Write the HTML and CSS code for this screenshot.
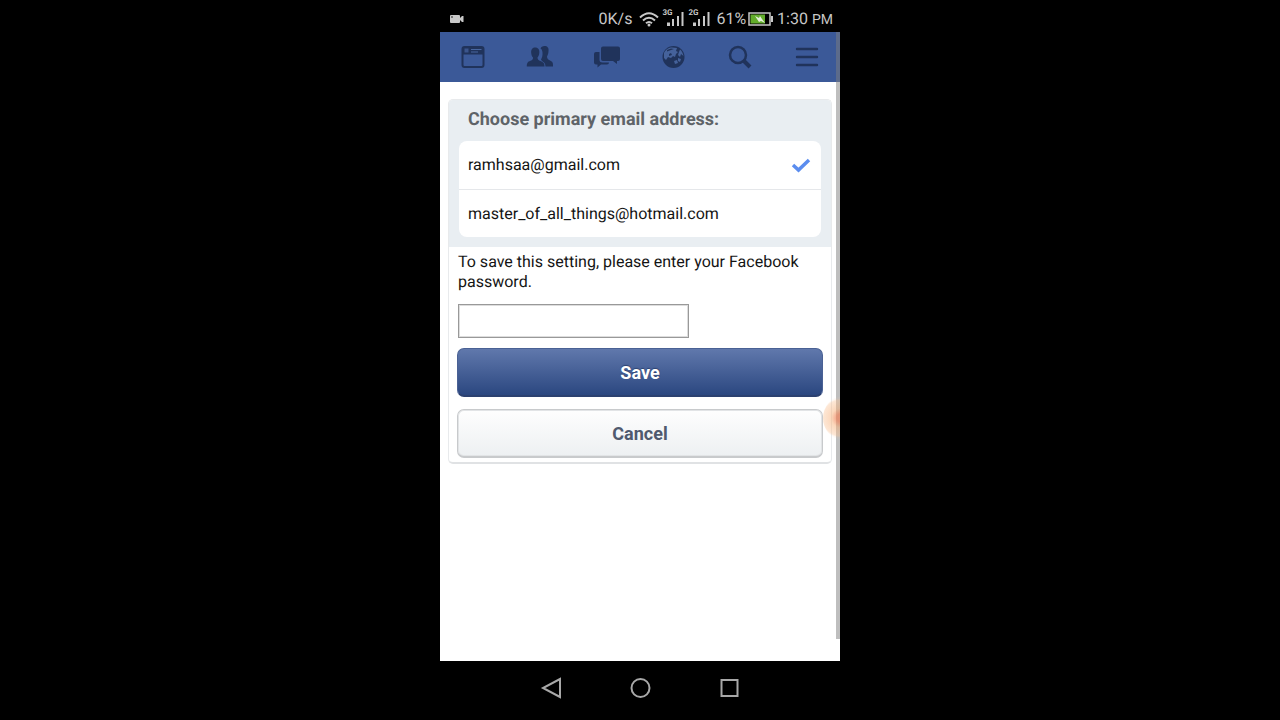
FILE: index.html
```html
<!DOCTYPE html>
<html lang="en">
<head>
  <meta charset="UTF-8">
  <meta name="viewport" content="width=device-width, initial-scale=1.0">
  <title>Primary email address</title>
  <link rel="stylesheet" href="styles.css">
</head>
<body>
<div class="phone">
  <header class="status">
    <svg class="camera" width="14" height="10" viewBox="0 0 14 10"><rect y="1" width="10" height="8" rx="1"/><path d="M10 4l2-2h1.500v6H12l-2-2z"/><path d="M1 3h2" stroke="#222"/></svg>
    <span class="speed">0K/s</span>
    <svg class="wifi" width="20" height="16" viewBox="0 0 20 16" fill="none" stroke="#c8c8c8" stroke-width="2"><path d="M1 6.500Q10-2 19 6.500M4 9.500q6-5.500 12 0M7 12.300q3-2.600 6 0"/><circle cx="10" cy="14" r="1.500" fill="#c8c8c8" stroke="none"/></svg>
    <span class="signal">
      <small>3G</small>
      <svg width="17" height="14" viewBox="0 0 17 14"><path d="M0 10.500h3V14H0zM5 7h2v7H5zM10 4h2v10h-2zM14.500 0h2v14h-2z"/></svg>
    </span>
    <span class="signal">
      <small>2G</small>
      <svg width="17" height="14" viewBox="0 0 17 14"><path d="M0 10.500h3V14H0zM5 7h2v7H5zM10 4h2v10h-2zM14.500 0h2v14h-2z"/></svg>
    </span>
    <span class="percent">61%</span>
    <svg class="battery" width="25" height="14" viewBox="0 0 25 14"><rect x="1" y="1" width="21" height="12" fill="#000" stroke="#c8c8c8" stroke-width="1.500"/><path d="M23 4h2v6h-2z"/><path d="M2.500 2.500H17v9H2.500z" fill="#62ad2b"/><path d="M7 4l4 2 1-2 2 3 3 4-4-2-2 1z" fill="#e4f0da"/></svg>
    <span class="time">1:30 <span class="pm">PM</span></span>
  </header>

  <main class="screen">
    <nav class="tabs">
      <a href="#" aria-label="News feed"><svg width="24" height="24" viewBox="0 0 24 24" fill="none" stroke="#20335b"><rect x="1.500" y="2" width="21" height="20" rx="2" stroke-width="2"/><path d="M2 6h20" stroke-width="7"/><path d="M3.500 3.500h4v4h-4z" fill="#3b558c" stroke="none"/><path d="M10 4.500h10.500M10 7h7" stroke="#4866a0"/></svg></a>
      <a href="#" aria-label="Friend requests"><svg width="28" height="24" viewBox="0 0 28 24" fill="#20335b"><path d="M18.500 1c3 0 4.500 2 4 5-.1 3-.8 4-1.500 5.500 0 2 1 3 3 4 2 .8 3 1.800 3 4.500v1.500h-7.500c0-3-1.500-4.600-3.500-5.600l-1-1.400c1-2 1.800-4 1.500-7-.2-2.500-1-3.500-2-4 .5-1.500 2-2.500 4-2.500z"/><path d="M9 2.500c3.500 0 4.800 2.500 4.300 5.500-.2 2.500-1 3.500-1.800 4.500 0 2 1 2.800 3 3.600 3 1.200 4 2.200 4 5.400H.8c0-3.500.8-4.600 3.700-5.700 2-.8 2.500-1.300 2.500-3.300C6 11.500 5.400 10.500 5.200 8c-.3-3 .8-5.500 3.800-5.500z"/></svg></a>
      <a href="#" aria-label="Messages"><svg width="28" height="24" viewBox="0 0 28 24" fill="#20335b"><path d="M10 1.500h15q2 0 2 2v10.500q0 2-2 2h-1v3l-4-3H10q-2 0-2-2V3.500q0-2 2-2z"/><path d="M3 7h3.500v8q0 2.500 3 2.500h6.500q0 2-2 2H8L4.500 22.500v-3H3q-2 0-2-2V9q0-2 2-2z"/></svg></a>
      <a href="#" aria-label="Notifications"><svg width="24" height="24" viewBox="0 0 24 24"><circle cx="12.500" cy="12" r="11" fill="#20335b"/><path d="M3 8c2-4 5-5.500 8-5.500l5 .5-1 3 2 1-2 2-1 3-2-1-2 2-3-1-2 3-2-2zM19 4.500c2 1.500 3 4 3.500 6.500L20 9l-1 3-2-2 1-3zM13 16l3-1 1 3-3 1zM17 13l3 1-1 3-2-1z" fill="#45629b"/><path d="M6 5l4-1.500 3 .5-3 1-4 1.500zM8 9l2-1 1 2-3 1z" fill="#20335b"/></svg></a>
      <a href="#" aria-label="Search"><svg width="24" height="24" viewBox="0 0 24 24" fill="none" stroke="#20335b"><circle cx="10" cy="10" r="8" stroke-width="2.500"/><path d="M15.500 15.500L22 22" stroke-width="4"/></svg></a>
      <a href="#" aria-label="Menu"><svg width="24" height="24" viewBox="0 0 24 24" fill="none" stroke="#20335b" stroke-width="2.400" stroke-linecap="round"><path d="M2 4h20M2 12h20M2 20h20"/></svg></a>
    </nav>

    <form class="card">
      <fieldset class="emails">
        <legend>Choose primary email address:</legend>
        <div class="options">
          <label class="option">
            <input type="radio" name="email" checked>
            <span>ramhsaa@gmail.com</span>
            <svg class="check" width="20" height="16" viewBox="0 0 20 16" fill="none" stroke="#5b8def" stroke-width="3.500"><path d="M2 8l5.500 5L18 3"/></svg>
          </label>
          <label class="option">
            <input type="radio" name="email">
            <span>master_of_all_things@hotmail.com</span>
            <svg class="check" width="20" height="16" viewBox="0 0 20 16" fill="none" stroke="#5b8def" stroke-width="3.500"><path d="M2 8l5.500 5L18 3"/></svg>
          </label>
        </div>
      </fieldset>
      <div class="confirm">
        <label for="password">To save this setting, please enter your Facebook password.</label>
        <input type="password" id="password">
        <button type="submit" class="btn btn-save">Save</button>
        <button type="button" class="btn btn-cancel">Cancel</button>
      </div>
    </form>
    <div class="scrollbar"></div>
    <div class="touch"></div>
  </main>

  <footer class="softkeys">
    <button aria-label="Back"><svg width="22" height="22" viewBox="0 0 22 22"><path d="M20 2v18L3 11z"/></svg></button>
    <button aria-label="Home"><svg width="22" height="22" viewBox="0 0 22 22"><circle cx="11.500" cy="11" r="9"/></svg></button>
    <button aria-label="Recent apps"><svg width="22" height="22" viewBox="0 0 22 22"><rect x="3.500" y="3" width="16" height="16"/></svg></button>
  </footer>
</div>
</body>
</html>
```
FILE: styles.css
```css
* {
  box-sizing: border-box;
}
body {
  margin: 0;
  background: #000;
  color: #141414;
  font-family: Roboto, sans-serif;
  font-size: 16px;
  line-height: 20px;
  text-rendering: geometricPrecision;
}
.phone {
  display: flex;
  flex-direction: column;
  max-width: 400px;
  min-height: 100vh;
  margin: 0 auto;
}

/* status bar */
.status {
  display: flex;
  align-items: center;
  height: 32px;
  padding: 6px 7px 0 10px;
  color: #c8c8c8;
  fill: #c8c8c8;
}
.camera {
  margin-right: auto;
}
.wifi {
  margin: 0 3px 0 7px;
}
.signal {
  display: flex;
  position: relative;
  margin-right: 4px;
  padding-left: 5px;
}
.signal small {
  position: absolute;
  top: -3px;
  left: 0;
  font-size: 8px;
  font-weight: bold;
  line-height: 8px;
}
.percent {
  margin: 0 2px;
}
.battery {
  margin-right: 4px;
}
.pm {
  font-size: 14px;
}

/* app */
.screen {
  position: relative;
  flex: 1;
  overflow: hidden;
  background: #fff;
}
.tabs {
  display: grid;
  grid-template-columns: repeat(6, 1fr);
  height: 50px;
  background: #3b5998;
}
.tabs a {
  display: flex;
  align-items: center;
  justify-content: center;
}
.card {
  margin: 17px 8px;
  border: 1px solid #e8eaec;
  border-bottom: 2px solid #e0e2e4;
  border-radius: 5px;
}
.emails {
  min-width: 0;
  margin: 0;
  padding: 10px;
  border: 0;
  border-radius: 4px 4px 0 0;
  background: #e9eef2;
}
.emails legend {
  float: left;
  width: 100%;
  padding: 0 9px 11px;
  color: #5e6368;
  font-size: 18px;
  font-weight: bold;
}
.options {
  clear: both;
  border-radius: 8px;
  background: #fff;
}
.option {
  display: flex;
  align-items: center;
  justify-content: space-between;
  height: 48px;
  padding: 0 10px 0 9px;
}
.option + .option {
  border-top: 1px solid #e5e7ea;
}
.option input {
  position: absolute;
  opacity: 0;
}
.check {
  visibility: hidden;
}
.option input:checked ~ .check {
  visibility: visible;
}
.confirm {
  padding: 5px 8px 4px;
}
.confirm label {
  display: block;
  margin-left: 1px;
}
.confirm input {
  display: block;
  width: 63%;
  height: 34px;
  margin: 12px 1px 10px;
  border: 1px solid #999;
  background: #fff;
  box-shadow: inset 0 0 0 1px #ddd;
}
.btn {
  display: block;
  width: 100%;
  height: 49px;
  border-radius: 7px;
  font-family: inherit;
  font-size: 18px;
  font-weight: bold;
}
.btn-save {
  margin-bottom: 12px;
  border: 1px solid #4a6194;
  border-bottom: 2px solid #2c4170;
  background: linear-gradient(#6078ac, #2b4780);
  color: #fff;
  text-shadow: 0 -1px 1px #2c4170;
}
.btn-cancel {
  border: 1px solid #c8cacc;
  border-bottom-width: 2px;
  background: linear-gradient(#fefefe, #edf0f2);
  box-shadow: inset 0 0 0 1px #e2e4e6;
  color: #505a6e;
}
.scrollbar {
  position: absolute;
  top: 0;
  right: 0;
  bottom: 22px;
  width: 4px;
  background: rgba(125, 125, 125, 0.5);
}
.touch {
  position: absolute;
  top: 365px;
  right: -19px;
  width: 36px;
  height: 42px;
  border-radius: 50%;
  background: radial-gradient(circle, rgba(240, 130, 90, 0.7) 15%, rgba(248, 176, 120, 0.5) 35%, rgba(250, 195, 150, 0.4) 65%, rgba(250, 200, 160, 0.1) 71%);
}

/* android keys */
.softkeys {
  display: flex;
  justify-content: center;
  height: 59px;
  padding-bottom: 5px;
}
.softkeys button {
  display: flex;
  align-items: center;
  justify-content: center;
  width: 89px;
  border: 0;
  background: none;
}
.softkeys svg {
  fill: none;
  stroke: #a8a8a8;
  stroke-width: 2;
}
```
